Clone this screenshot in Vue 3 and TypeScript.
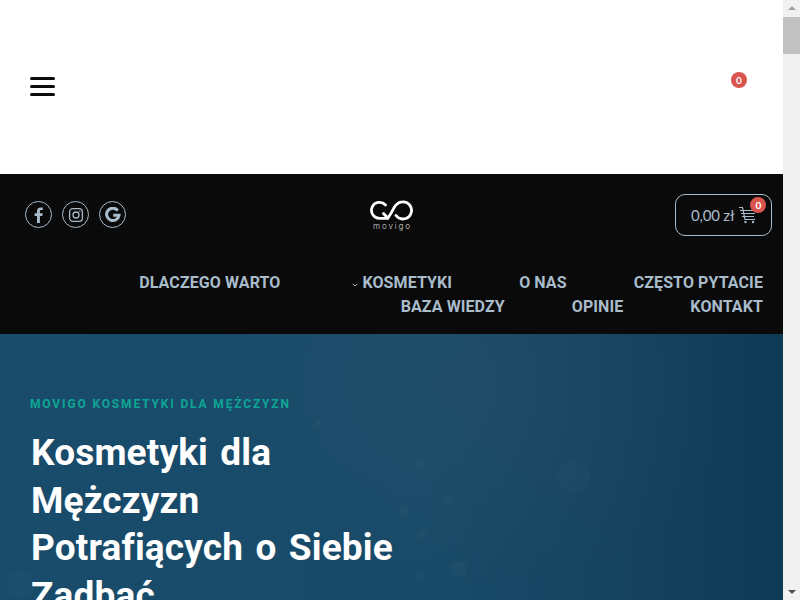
<script setup lang="ts">
const row = ['DLACZEGO WARTO', 'KOSMETYKI', 'O NAS', 'CZĘSTO PYTACIE', 'BAZA WIEDZY', 'OPINIE', 'KONTAKT']
const blobs = [
  { x: 574, y: 143, r: 16, o: 0.018 }, { x: 421, y: 130, r: 6, o: 0.018 }, { x: 459, y: 235, r: 8, o: 0.022 },
  { x: 404, y: 176, r: 5, o: 0.018 }, { x: 318, y: 89, r: 3, o: 0.03 }, { x: 422, y: 200, r: 5, o: 0.018 },
  { x: 448, y: 168, r: 6, o: 0.015 }, { x: 420, y: 243, r: 4, o: 0.018 }, { x: 20, y: 250, r: 14, o: 0.015 }
]
</script>

<template>
  <div class="page">
    <main class="main">
      <header class="top">
        <button class="burger" aria-label="Menu"><span></span><span></span><span></span></button>
        <div class="topcart"><b class="badge">0</b></div>
      </header>

      <section class="dark">
        <div class="bar">
          <div class="socials">
            <a class="social">
              <svg width="16" height="16" viewBox="0 0 16 16"><path fill="#a9bccb" d="M6 16V9H3.6V6.2H6V4.1C6 1.7 7.4.4 9.6.4c1 0 1.9.1 2.2.1V3H10.3C9.1 3 8.9 3.6 8.9 4.4V6.2h2.8L11.3 9H8.9v7z"/></svg>
            </a>
            <a class="social">
              <svg width="16" height="16" viewBox="0 0 16 16" fill="none" stroke="#a9bccb" stroke-width="1.3"><rect x="1.6" y="1.6" width="12.8" height="12.8" rx="3.4"/><circle cx="8" cy="8" r="3"/><circle cx="11.8" cy="4.2" r=".7" fill="#a9bccb" stroke="none"/></svg>
            </a>
            <a class="social">
              <svg width="16" height="16" viewBox="0 0 16 16" fill="none" stroke="#a9bccb" stroke-width="3"><path d="M12.8 3.6A6.2 6.2 0 1 0 14 8.2H8.2"/></svg>
            </a>
          </div>

          <div class="logo">
            <svg width="44" height="21" viewBox="0 0 44 21" fill="none" stroke="#fff" stroke-width="2.8" stroke-linecap="round" stroke-linejoin="round">
              <path d="M15.5 5A8 8 0 1 0 10 18.3H17.5"/>
              <path d="M13.5 13.5L18 18.3"/>
              <path d="M18.5 17C21.5 13.5 22.5 9.5 25.5 5.5C27.5 3 29.5 1.8 32.5 1.8A8.6 8.6 0 1 1 26 15.5"/>
            </svg>
            <span class="word">movigo</span>
          </div>

          <div class="minicart">
            <span class="amount">0,00 zł</span>
            <span class="cartwrap">
              <svg width="18" height="18" viewBox="0 0 18 18" fill="none" stroke="#a9bccb" stroke-width="1.2"><path d="M0 1.5H3.5L6 13.5H16M1 4.5H17M2 7.5H16M3 10.5H15"/><circle cx="6.5" cy="16" r="1.2" fill="#a9bccb" stroke="none"/><circle cx="14" cy="16" r="1.2" fill="#a9bccb" stroke="none"/></svg>
              <b class="badge small">0</b>
            </span>
          </div>
        </div>

        <nav class="nav">
          <a v-for="item in row" :key="item" class="link" :class="{ sub: item === 'KOSMETYKI' }">
            <svg v-if="item === 'KOSMETYKI'" class="chev" width="6" height="4" viewBox="0 0 6 4" fill="none" stroke="#c9d4dc" stroke-width="0.9"><path d="M.7.8L3 3L5.3.8"/></svg>{{ item }}
          </a>
        </nav>
      </section>

      <section class="hero">
        <svg class="texture" width="783" height="266" viewBox="0 0 783 266" aria-hidden="true">
          <circle v-for="(b, i) in blobs" :key="i" :cx="b.x" :cy="b.y" :r="b.r" fill="#fff" :fill-opacity="b.o" />
        </svg>
        <p class="eyebrow">MOVIGO KOSMETYKI DLA MĘŻCZYZN</p>
        <h1 class="title">Kosmetyki dla Mężczyzn Potrafiących o Siebie Zadbać</h1>
      </section>
    </main>

    <aside class="scrollbar">
      <i class="arrow up"></i>
      <div class="track"><div class="thumb"></div></div>
      <i class="arrow down"></i>
    </aside>
  </div>
</template>

<style>
html, body { margin: 0; overflow: hidden; background: #fff; }
</style>

<style scoped>
* { box-sizing: border-box; }
.page { display: flex; width: 800px; height: 600px; overflow: hidden; font-family: "Roboto", "Liberation Sans", sans-serif; }
.main { width: 783px; height: 600px; overflow: hidden; display: flex; flex-direction: column; flex: none; }

.top { height: 174px; flex: none; display: flex; align-items: center; justify-content: space-between; padding: 0 36px 0 30px; background: #fff; }
.burger { width: 25px; height: 19px; margin-top: -1px; padding: 0; border: 0; background: none; display: flex; flex-direction: column; justify-content: space-between; }
.burger span { display: block; height: 3px; border-radius: 2px; background: #0a0a0a; }
.topcart { position: relative; width: 30px; height: 30px; }
.badge { display: flex; align-items: center; justify-content: center; position: absolute; top: 0; right: 0; width: 16px; height: 16px; border-radius: 50%; background: #d9534f; color: #fff; font-size: 10px; font-weight: 700; font-family: "Lato", sans-serif; }

.dark { background: #0a0a0a; height: 160px; flex: none; }
.bar { height: 80px; display: grid; grid-template-columns: 1fr auto 1fr; align-items: center; padding: 0 11px; }
.socials { display: flex; gap: 10px; padding-left: 14px; margin-top: 1px; }
.social { width: 27px; height: 27px; border-radius: 50%; border: 1px solid #a9bccb; display: flex; align-items: center; justify-content: center; }
.logo { display: flex; flex-direction: column; align-items: center; color: #fff; margin-top: 1px; }
.logo svg { display: block; }
.word { font-family: "Inter", sans-serif; font-size: 8px; font-weight: 300; line-height: 8px; letter-spacing: 1.9px; color: #d8d8d8; margin-top: 1px; padding-left: 2px; }
.minicart { justify-self: end; width: 97px; height: 42px; margin-top: 1px; border: 1px solid #a9bccb; border-radius: 10px; display: flex; align-items: center; padding-left: 15px; gap: 5px; }
.amount { font-family: "Lato", sans-serif; font-size: 15px; letter-spacing: -0.2px; color: #a9bccb; white-space: nowrap; }
.cartwrap { position: relative; display: block; width: 18px; height: 18px; }
.cartwrap svg { display: block; }
.badge.small { top: -9px; right: -9px; }

.nav { display: flex; flex-wrap: wrap; justify-content: flex-end; column-gap: 67px; padding: 17px 20px 0 0; }
.link { font-size: 16px; line-height: 24px; font-weight: 700; letter-spacing: .1px; color: #a9bccb; white-space: nowrap; position: relative; }
.sub { padding-left: 15px; }
.chev { position: absolute; left: 5px; top: 12px; }

.hero { position: relative; flex: 1; overflow: hidden; padding: 62px 30px 0; background:
  radial-gradient(ellipse 260px 200px at 480px 50px, rgba(70,90,110,.2), transparent 100%),
  linear-gradient(90deg, #194c6b 0%, #184b69 55%, #15425f 80%, #0e3a56 100%); }
.texture { position: absolute; left: 0; top: 0; }
.eyebrow { position: relative; margin: 0; font-size: 12px; line-height: 16px; font-weight: 700; letter-spacing: 1.85px; color: #0fa595; }
.title { position: relative; margin: 17px 0 0 1px; width: 385px; font-size: 37px; line-height: 47.7px; font-weight: 700; letter-spacing: .15px; word-spacing: 3px; color: #fff; }

.scrollbar { width: 17px; height: 600px; flex: none; background: #f1f1f1; display: flex; flex-direction: column; align-items: center; }
.arrow { width: 0; height: 0; flex: none; border-left: 4px solid transparent; border-right: 4px solid transparent; }
.arrow.up { border-bottom: 4px solid #a3a3a3; margin: 6px 0 7px; }
.arrow.down { border-top: 4px solid #505050; margin: 7px 0 6px; }
.track { flex: 1; width: 100%; }
.thumb { width: 100%; height: 37px; background: #c1c1c1; }
</style>
